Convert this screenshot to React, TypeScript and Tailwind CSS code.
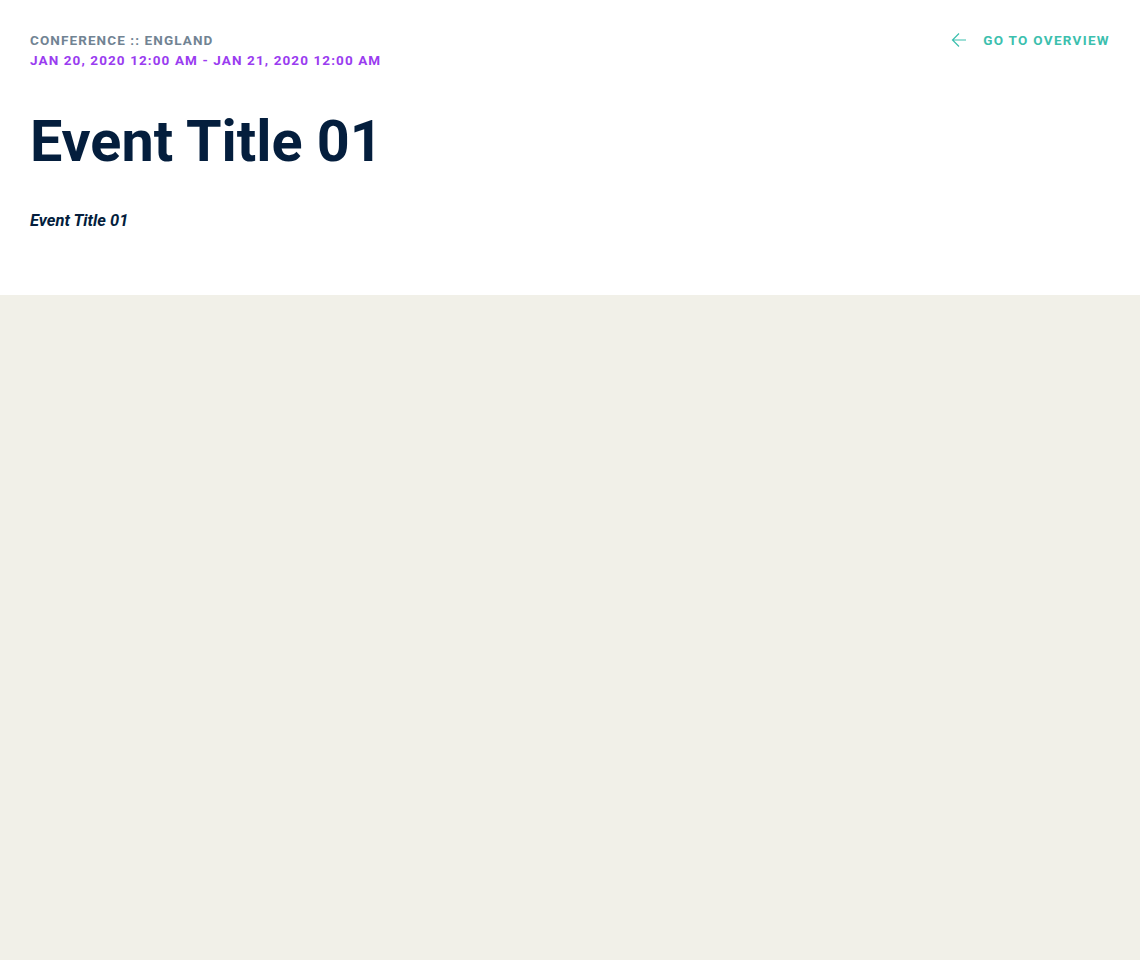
export default function App() {
  return (
    <div className="min-h-screen bg-[#f1f0e8]" style={{ fontFamily: "Roboto, 'Liberation Sans', sans-serif" }}>
      <header className="bg-white h-[295px] px-[30px] pt-[30px]">
        <div className="flex items-start justify-between">
          <div>
            <p className="text-[13.5px] leading-[20px] font-bold tracking-[1.1px] uppercase text-[#718393]">Conference :: England</p>
            <p className="text-[13.5px] leading-[20px] font-bold tracking-[1.1px] uppercase text-[#9a3cf0]">
              Jan 20, 2020 12:00 AM - Jan 21, 2020 12:00 AM
            </p>
          </div>
          <a href="#" className="flex items-center gap-[16px] text-[13.5px] leading-[20px] font-bold tracking-[1.3px] uppercase text-[#3cbfae]">
            <svg width="16" height="16" viewBox="0 0 16 16" fill="none" stroke="currentColor" strokeWidth="1.2">
              <path d="M15 8H1.5M8 1.5L1.5 8L8 14.5" />
            </svg>
            Go to overview
          </a>
        </div>
        <h1 className="mt-[37px] text-[57.5px] leading-[70px] font-bold text-[#041e3d]">Event Title 01</h1>
        <p className="mt-[33px] text-[16.5px] leading-[22px] font-bold italic text-[#041e3d]">Event Title 01</p>
      </header>
    </div>
  );
}
